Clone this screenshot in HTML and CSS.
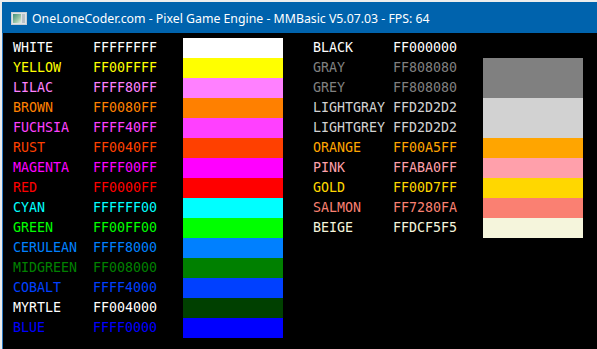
FILE: index.html
```html
<!DOCTYPE html>
<html lang="en">
  <head>
    <meta charset="UTF-8" />
    <title>OneLoneCoder.com - Pixel Game Engine - MMBasic V5.07.03 - FPS: 64</title>
    <link rel="stylesheet" href="styles.css">
  </head>
  <body>
    <div class="window">
      <!-- Title bar -->
      <div class="titlebar">
        <svg class="app-icon" width="16" height="13" viewBox="0 0 16 13">
          <defs>
            <linearGradient id="pane" x1="0" y1="0" x2="1" y2="1">
              <stop offset="0" stop-color="#3f8f7a" />
              <stop offset="0.6" stop-color="#9cc7a8" />
              <stop offset="1" stop-color="#e4efe6" />
            </linearGradient>
          </defs>
          <rect x="0.5" y="0.5" width="15" height="12" fill="#dfe3e6" stroke="#c9ced2" />
          <rect x="2" y="2" width="8" height="9" fill="url(#pane)" />
          <rect x="11" y="2" width="3" height="9" fill="#b8c2c8" />
        </svg>
        <span class="title">OneLoneCoder.com - Pixel Game Engine - MMBasic V5.07.03 - FPS: 64</span>
      </div>

      <!-- Colour table -->
      <div class="screen">
        <div class="column" id="col-left"></div>
        <div class="column" id="col-right"></div>
      </div>
    </div>

    <script>
      // name, ABGR value, swatch colour, text colour (if different)
      const left = [
        ["WHITE", "FFFFFFFF", "#ffffff"],
        ["YELLOW", "FF00FFFF", "#ffff00"],
        ["LILAC", "FFFF80FF", "#ff80ff"],
        ["BROWN", "FF0080FF", "#ff8000"],
        ["FUCHSIA", "FFFF40FF", "#ff40ff"],
        ["RUST", "FF0040FF", "#ff4000"],
        ["MAGENTA", "FFFF00FF", "#ff00ff"],
        ["RED", "FF0000FF", "#ff0000"],
        ["CYAN", "FFFFFF00", "#00ffff"],
        ["GREEN", "FF00FF00", "#00ff00"],
        ["CERULEAN", "FFFF8000", "#0080ff"],
        ["MIDGREEN", "FF008000", "#008000"],
        ["COBALT", "FFFF4000", "#0040ff"],
        ["MYRTLE", "FF004000", "#004000", "#ffffff"],
        ["BLUE", "FFFF0000", "#0000ff"]
      ];

      const right = [
        ["BLACK", "FF000000", "#000000", "#ffffff"],
        ["GRAY", "FF808080", "#808080"],
        ["GREY", "FF808080", "#808080"],
        ["LIGHTGRAY", "FFD2D2D2", "#d2d2d2"],
        ["LIGHTGREY", "FFD2D2D2", "#d2d2d2"],
        ["ORANGE", "FF00A5FF", "#ffa500"],
        ["PINK", "FFABA0FF", "#ffa0ab"],
        ["GOLD", "FF00D7FF", "#ffd700"],
        ["SALMON", "FF7280FA", "#fa8072"],
        ["BEIGE", "FFDCF5F5", "#f5f5dc"]
      ];

      function fillColumn(id, rows) {
        const col = document.getElementById(id);
        rows.forEach(function (r) {
          const row = document.createElement("div");
          row.className = "row";
          row.style.color = r[3] || r[2];
          row.innerHTML = `
            <span class="name">${r[0]}</span>
            <span class="hex">${r[1]}</span>
            <span class="swatch" style="background:${r[2]}"></span>
          `;
          col.appendChild(row);
        });
      }

      fillColumn("col-left", left);
      fillColumn("col-right", right);
    </script>
  </body>
</html>
```

FILE: styles.css
```css
/* Desktop behind the window */
body {
  margin: 0;
  background: #eceded;
  width: 597px;
  height: 349px;
  overflow: hidden;
}

.window {
  margin: 2px 0 0 2px;
  height: 347px;
  display: flex;
  flex-direction: column;
}

/* Title bar */
.titlebar {
  height: 31px;
  background: #0063ad;
  display: flex;
  align-items: center;
  padding-left: 9px;
  gap: 5px;
  flex-shrink: 0;
}

.app-icon {
  display: block;
  margin-top: 1px;
}

.title {
  color: #ffffff;
  font-family: "Noto Sans", "Open Sans", sans-serif;
  font-size: 12.3px;
  white-space: nowrap;
  margin-top: 1px;
}

/* Pixel screen */
.screen {
  flex: 1;
  background: #000000;
  border-left: 1px solid #2d79c0;
  display: flex;
  gap: 30px;
  padding: 5px 0 0 10px;
}

.column {
  display: flex;
  flex-direction: column;
}

.row {
  display: flex;
  height: 20px;
  line-height: 20px;
  font-family: "DejaVu Sans Mono", "Liberation Mono", monospace;
  font-size: 13.3px;
  white-space: pre;
}

.name,
.hex {
  width: 80px;
}

.swatch {
  width: 100px;
  margin-left: 10px;
}
```
